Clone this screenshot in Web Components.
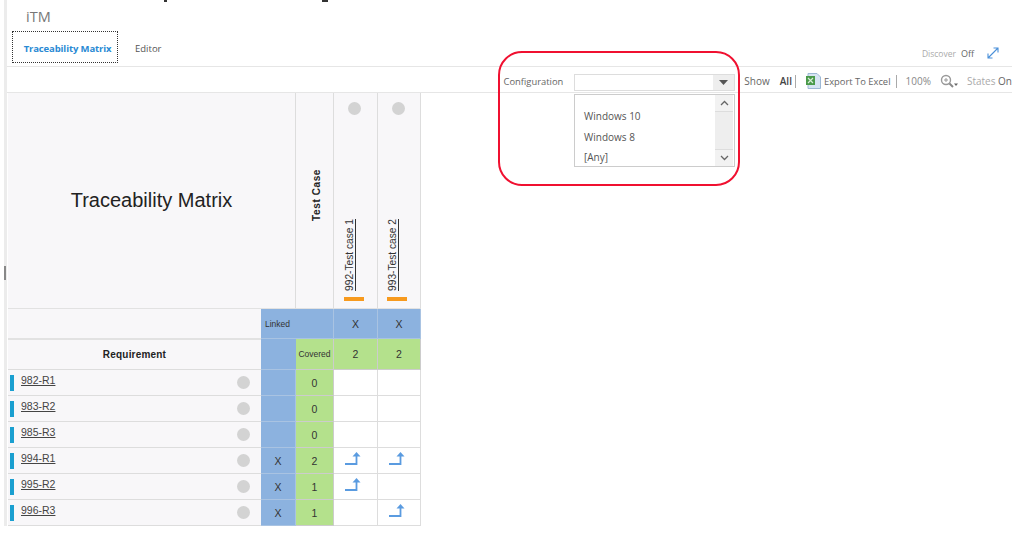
<!DOCTYPE html>
<html>
<head>
<meta charset="utf-8">
<style>
  html, body { margin: 0; padding: 0; background: #fff; }
  body { width: 1024px; height: 542px; overflow: hidden; position: relative; font-family: "Open Sans", "Liberation Sans", sans-serif; }
</style>
</head>
<body>
<itm-page></itm-page>

<script>
class ItmHeader extends HTMLElement {
  constructor() {
    super();
    this.attachShadow({ mode: "open" });
  }
  connectedCallback() {
    this.shadowRoot.innerHTML = `
      <style>
        :host { display: block; height: 66px; box-sizing: border-box; padding: 8px 13px 0 5px; }
        .title { font-size: 14.5px; line-height: 17px; color: #777; padding-left: 14px; height: 23px; }
        .row { display: flex; align-items: center; }
        .tab-active {
          width: 106px; height: 32px; box-sizing: border-box; border: 1px dotted #333; padding: 2px 0 0 5px;
          display: flex; align-items: center; justify-content: center;
          font-size: 9.5px; font-weight: 700; color: #2a8ad4; letter-spacing: -0.12px;
        }
        .tab { margin-left: 17px; font-size: 9.5px; color: #555; margin-top: 2px; }
        .discover { margin-left: auto; display: flex; align-items: center; font-size: 8.5px; color: #aaa; margin-top: 12px; }
        .discover b { font-weight: 400; font-size: 9px; color: #666; margin-left: 5px; }
        .discover svg { margin-left: 13px; }
      </style>
      <div class="title">iTM</div>
      <div class="row">
        <div class="tab-active">Traceability Matrix</div>
        <div class="tab">Editor</div>
        <div class="discover">Discover <b>Off</b>
          <svg width="12" height="12" viewBox="0 0 12 12" fill="none" stroke="#4a90d9" stroke-width="1.1">
            <path d="M1 11 11 1M6.5 1H11V5.5M1 6.5V11H5.5"/>
          </svg>
        </div>
      </div>
    `;
  }
}

class ItmToolbar extends HTMLElement {
  constructor() {
    super();
    this.attachShadow({ mode: "open" });
  }
  connectedCallback() {
    this.shadowRoot.innerHTML = `
      <style>
        :host {
          display: flex; align-items: center; justify-content: flex-end; height: 27px; box-sizing: border-box;
          padding-top: 3px;
          border-top: 1.5px solid #e6e6e6; border-bottom: 1.5px solid #e6e6e6;
          font-size: 10px; color: #666; white-space: nowrap;
        }
        .combo {
          width: 161px; height: 17px; box-sizing: border-box; margin: 2px 9px 0 11px;
          border: 1px solid #ddd; display: flex; justify-content: flex-end; background: #fff;
        }
        .combo i { width: 21px; background: #eee; display: flex; align-items: center; justify-content: center; }
        .sep { width: 1px; height: 13px; background: #aaa; }
        .small { font-size: 9.4px; }
        b { color: #444; font-weight: 600; }
        .states { color: #aaa; margin-left: 9px; }
        .states span { color: #666; }
        svg { display: block; }
      </style>
      <span class="small">Configuration</span>
      <div class="combo"><i><svg width="9" height="5" viewBox="0 0 9 5"><path d="M0 0h9L4.500 5z" fill="#555"/></svg></i></div>
      <span>Show</span>
      <b style="margin-left:10px">All</b>
      <div class="sep" style="margin:0 10px 0 3px"></div>
      <svg width="15" height="16" viewBox="0 0 15 16">
        <path d="M2 .5h9l3.500 3.500v11.500H2z" fill="#d6e4f2" stroke="#9db8d4"/>
        <rect x="0" y="3" width="9" height="9" fill="#4a9a4a"/>
        <path d="M2 5l5 5M7 5l-5 5" stroke="#d8ecd8" stroke-width="1.200"/>
      </svg>
      <span class="small" style="margin-left:3px">Export To Excel</span>
      <div class="sep" style="margin:0 9px 0 5px"></div>
      <span style="color:#888">100%</span>
      <svg style="margin-left:9px" width="18" height="14" viewBox="0 0 18 14" fill="none">
        <circle cx="6" cy="6" r="4.500" stroke="#999" stroke-width="1.400"/>
        <path d="M9.500 9.500 13 13" stroke="#888" stroke-width="2"/>
        <path d="M4 6h4M6 4v4" stroke="#999"/>
        <path d="M14 9.500h4L16 12z" fill="#666"/>
      </svg>
      <span class="states">States <span>On</span></span>
    `;
  }
}

class ItmMatrix extends HTMLElement {
  constructor() {
    super();
    this.attachShadow({ mode: "open" });
  }
  connectedCallback() {
    this.render();
  }
  render() {
    const arrow = `<svg width="16" height="15" viewBox="0 0 16 15" fill="none">
        <path d="M0 12h11.500V3" stroke="#5a9be0" stroke-width="1.800"/>
        <path d="M7.500 4.500 11.500 0l4 4.500z" fill="#5a9be0"/>
      </svg>`;
    const rows = [
      ["982-R1", "", "0", "", ""],
      ["983-R2", "", "0", "", ""],
      ["985-R3", "", "0", "", ""],
      ["994-R1", "X", "2", 1, 1],
      ["995-R2", "X", "1", 1, ""],
      ["996-R3", "X", "1", "", 1],
    ];
    let rowHtml = "";
    rows.forEach((r) => {
      rowHtml += `
        <div class="cell req"><i class="bar"></i><a>${r[0]}</a><i class="dot"></i></div>
        <div class="cell blue num">${r[1]}</div>
        <div class="cell green num">${r[2]}</div>
        <div class="cell data">${r[3] ? arrow : ""}</div>
        <div class="cell data">${r[4] ? arrow : ""}</div>
      `;
    });
    this.shadowRoot.innerHTML = `
      <style>
        :host {
          display: grid; width: 413px; margin-left: 1px;
          grid-template-columns: 253px 35px 38px 44px 43px;
          grid-template-rows: 216px 30px 31px repeat(6, 26px);
          font-family: "Liberation Sans", Arial, sans-serif; color: #333;
        }
        .cell { box-sizing: border-box; display: flex; align-items: center; justify-content: center; }
        .head { background: #f8f7f9; border-right: 1px solid #ddd; border-bottom: 1px solid #e2e2e2; }
        .tm { grid-column: 1 / span 2; font-size: 20px; color: #222; }
        .vert { writing-mode: vertical-rl; transform: rotate(180deg); }
        .testcase-cell { padding-left: 3px; }
        .testcase { font-size: 10px; font-weight: 700; letter-spacing: .6px; color: #222; padding-top: 11px; }
        .tc { flex-direction: column; justify-content: flex-start; padding: 9px 2px 0 0; }
        .tc .dot { margin: 0; }
        .tc a { font-size: 10.2px; text-decoration: underline; color: #333; margin-top: auto; margin-right: 11px; }
        .tc u { display: block; width: 20px; height: 4px; background: #f79a1e; margin: 6px 2px 7px 0; }
        .dot { display: block; width: 13px; height: 13px; border-radius: 50%; background: #d3d3d3; flex: none; }
        .blue { background: #8cb2df; border-right: 1px solid #a9c3e2; border-bottom: 1px solid #a9c3e2; }
        .green { background: #b4e18c; border-right: 1px solid #ccc; border-bottom: 1px solid #ccc; }
        .linked { grid-column: 2 / span 2; justify-content: flex-start; align-items: flex-start; font-size: 8.5px; padding: 10px 0 0 4px; }
        .covered { font-size: 8.5px; }
        .num { font-size: 10.5px; }
        .req-head { background: #f8f7f9; border-top: 1px solid #e2e2e2; border-bottom: 1px solid #ddd; font-size: 10px; font-weight: 700; color: #222; letter-spacing: .2px; }
        .req { background: #f8f7f9; border-bottom: 1px solid #ddd; justify-content: flex-start; padding: 0 11px 0 2px; }
        .req .bar { width: 4px; height: 16px; background: #1a9fd0; flex: none; }
        .req a { font-size: 10.5px; text-decoration: underline; color: #444; margin: -5px 0 0 7px; }
        .req .dot { margin: 0 0 0 auto; }
        .data { background: #fff; border-right: 1px solid #ddd; border-bottom: 1px solid #ddd; padding-right: 5px; }
        .data svg { margin-top: -3px; }
      </style>
      <div class="cell head tm">Traceability Matrix</div>
      <div class="cell head testcase-cell"><span class="vert testcase">Test Case</span></div>
      <div class="cell head tc"><i class="dot"></i><a class="vert">992-Test case 1</a><u></u></div>
      <div class="cell head tc"><i class="dot"></i><a class="vert">993-Test case 2</a><u></u></div>

      <div class="cell head" style="border-right:0"></div>
      <div class="cell blue linked">Linked</div>
      <div class="cell blue num">X</div>
      <div class="cell blue num">X</div>

      <div class="cell req-head">Requirement</div>
      <div class="cell blue" style="border-right:0"></div>
      <div class="cell green covered">Covered</div>
      <div class="cell green num">2</div>
      <div class="cell green num">2</div>
      ${rowHtml}
    `;
  }
}

class ItmConfigList extends HTMLElement {
  constructor() {
    super();
    this.attachShadow({ mode: "open" });
  }
  connectedCallback() {
    this.shadowRoot.innerHTML = `
      <style>
        :host {
          position: absolute; left: 574px; top: 94px; width: 161px; height: 73px; box-sizing: border-box;
          border: 1px solid #ccc; background: #fff; display: flex; font-size: 10px; color: #555;
        }
        ul { flex: 1; list-style: none; margin: 0; padding: 11px 0 0 9px; }
        li { height: 20.500px; line-height: 20.500px; }
        .scroll { width: 18px; margin-right: 1px; background: #eee; display: flex; flex-direction: column; justify-content: space-between; }
        .scroll i { height: 16px; display: flex; align-items: center; justify-content: center; background: #f2f2f2; }
      </style>
      <ul><li>Windows 10</li><li>Windows 8</li><li>[Any]</li></ul>
      <div class="scroll">
        <i style="border-bottom:1px solid #ddd"><svg width="9" height="6" viewBox="0 0 9 6" fill="none" stroke="#666" stroke-width="1.300"><path d="M1 5l3.500-3.500L8 5"/></svg></i>
        <i style="border-top:1px solid #ddd"><svg width="9" height="6" viewBox="0 0 9 6" fill="none" stroke="#666" stroke-width="1.300"><path d="M1 1l3.500 3.500L8 1"/></svg></i>
      </div>
    `;
  }
}

class ItmCallout extends HTMLElement {
  constructor() {
    super();
    this.attachShadow({ mode: "open" });
  }
  connectedCallback() {
    this.shadowRoot.innerHTML = `
      <style>
        :host {
          position: absolute; left: 498px; top: 51px; width: 242px; height: 135px; box-sizing: border-box;
          border: 2px solid #f01030; border-radius: 24px; pointer-events: none;
        }
      </style>
    `;
  }
}

class ItmPage extends HTMLElement {
  constructor() {
    super();
    this.attachShadow({ mode: "open" });
  }
  connectedCallback() {
    this.shadowRoot.innerHTML = `
      <style>
        :host { display: block; width: 1012px; height: 527px; box-sizing: border-box; padding-left: 4px; position: relative; }
        .main { border-left: 3px solid #ececec; height: 526px; box-sizing: border-box; position: relative; }
        .handle { position: absolute; left: -3px; top: 266px; width: 2px; height: 14px; background: #888; }
        /* bits of the clipped line above the shot */
        .clip { position: absolute; top: 0; height: 2px; background: #333; }
      </style>
      <div class="main">
        <itm-header></itm-header>
        <itm-toolbar></itm-toolbar>
        <itm-matrix></itm-matrix>
        <div class="handle"></div>
      </div>
      <div class="clip" style="left:164px;width:3px"></div>
      <div class="clip" style="left:322px;width:6px"></div>
      <itm-config-list></itm-config-list>
      <itm-callout></itm-callout>
    `;
  }
}

customElements.define("itm-header", ItmHeader);
customElements.define("itm-toolbar", ItmToolbar);
customElements.define("itm-matrix", ItmMatrix);
customElements.define("itm-config-list", ItmConfigList);
customElements.define("itm-callout", ItmCallout);
customElements.define("itm-page", ItmPage);
</script>
</body>
</html>
